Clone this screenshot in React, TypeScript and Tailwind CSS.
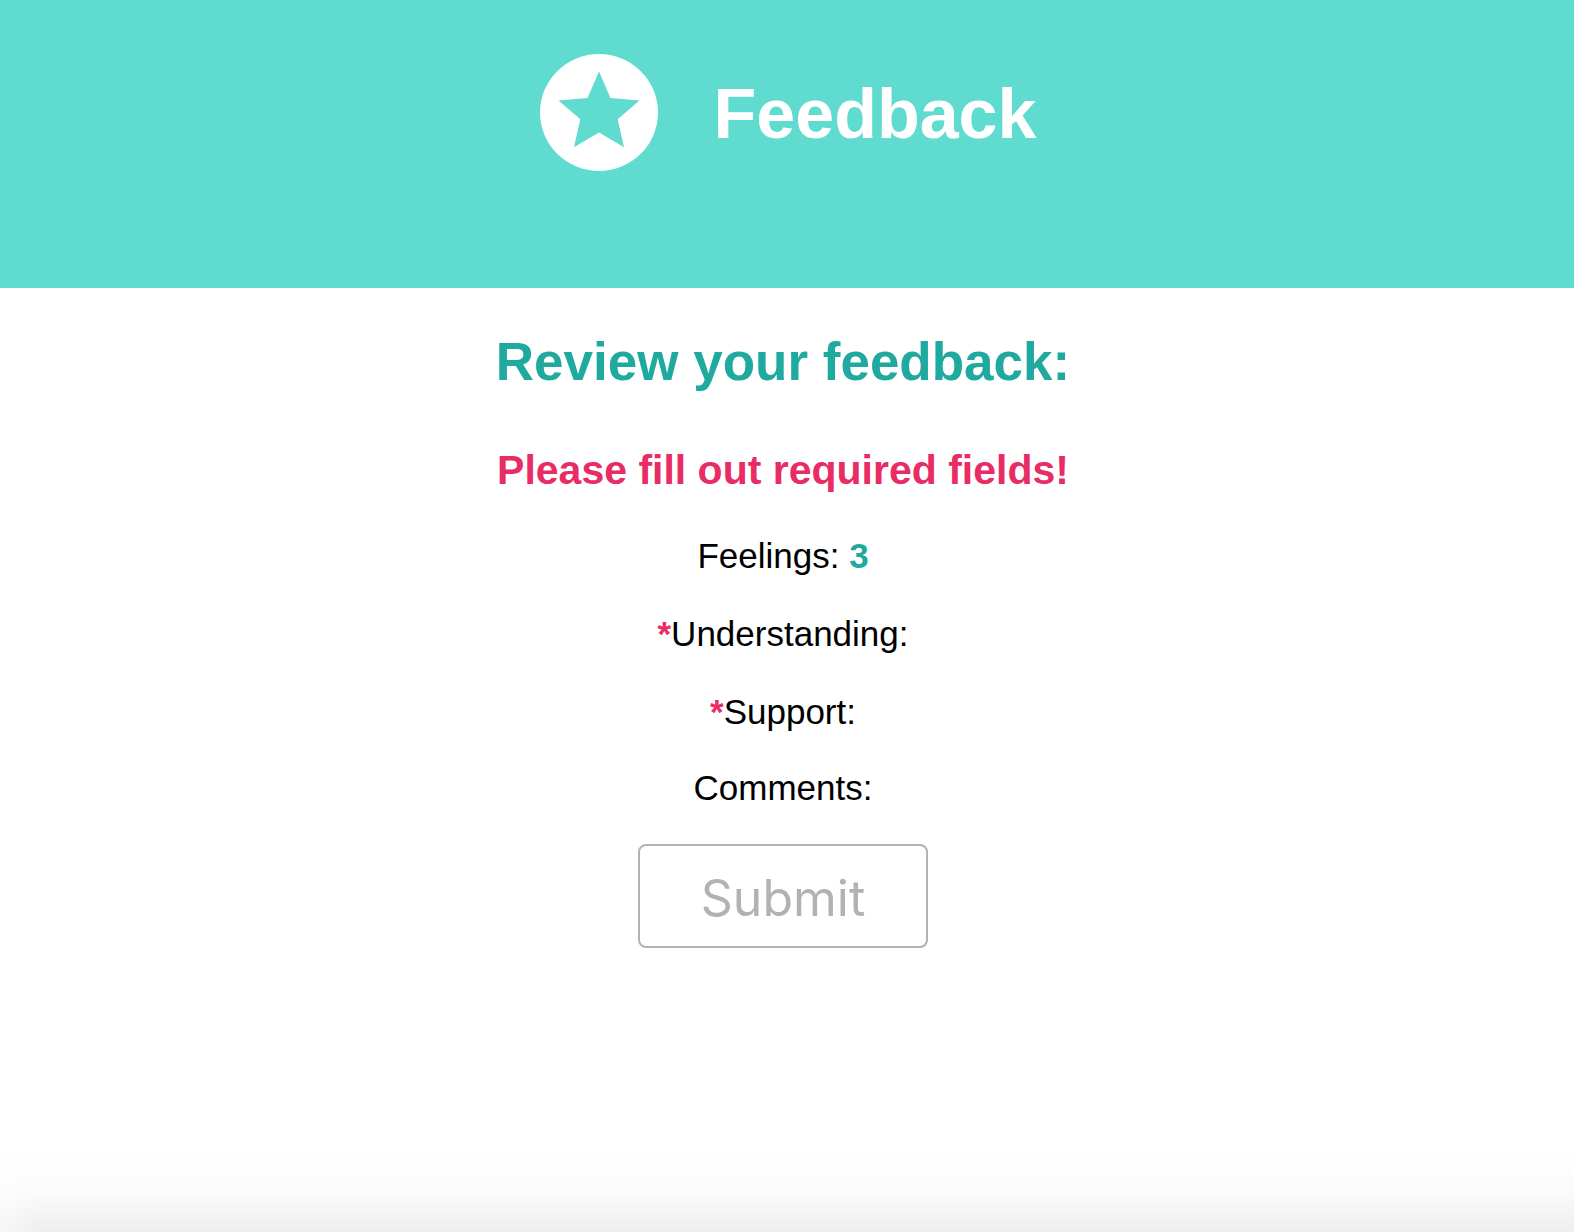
import React from "react";

function StarBadge() {
  return (
    <svg width="118" height="117" viewBox="0 0 118 117" aria-hidden="true" className="shrink-0">
      <ellipse cx="59" cy="58.5" rx="59" ry="58.5" fill="#ffffff" />
      <path
        d="M59 17.5 70.5 44 99.5 46.5 77.7 65.3 84 93.3 59 78.5 34 93.3 40.3 65.3 18.5 46.5 47.5 44Z"
        fill="#60dbd0"
      />
    </svg>
  );
}

function Required() {
  return <span className="font-bold text-[#e82c64]">*</span>;
}

export default function App() {
  return (
    <div className="flex min-h-screen flex-col bg-white font-['Liberation_Sans',Arial,sans-serif] text-black">
      <header className="flex items-start justify-center gap-14 bg-[#60dbd0] pt-[54px] pb-[114px] pl-0.5">
        <StarBadge />
        <h1 className="text-[70px] leading-[120px] font-bold text-white">Feedback</h1>
      </header>

      <main className="flex flex-1 flex-col items-center pt-11 pr-2 text-center">
        <h2 className="text-[53px] leading-[60px] font-bold text-[#1fa99f]">Review your feedback:</h2>
        <h3 className="mt-[54px] text-[41px] leading-[48px] font-bold text-[#e82c64]">
          Please fill out required fields!
        </h3>
        <p className="mt-[42px] text-[35px] leading-10">
          Feelings: <span className="font-bold text-[#1fa99f]">3</span>
        </p>
        <p className="mt-[38px] text-[35px] leading-10">
          <Required />
          Understanding:
        </p>
        <p className="mt-[38px] text-[35px] leading-10">
          <Required />
          Support:
        </p>
        <p className="mt-9 text-[35px] leading-10">Comments:</p>
        <button
          type="button"
          disabled
          className="mt-9 rounded-lg border-2 border-[#b2b2b2] bg-white px-[61px] pt-5 pb-4 font-['Inter',sans-serif] text-[50px] leading-[64px] text-[#b2b2b2]"
        >
          Submit
        </button>
      </main>

      <div className="h-20 bg-linear-to-b from-white via-[#fbfbfb] to-[#eeeeee]">
        <div className="h-full w-10 bg-linear-to-r from-white/50 to-white/0" />
      </div>
    </div>
  );
}
